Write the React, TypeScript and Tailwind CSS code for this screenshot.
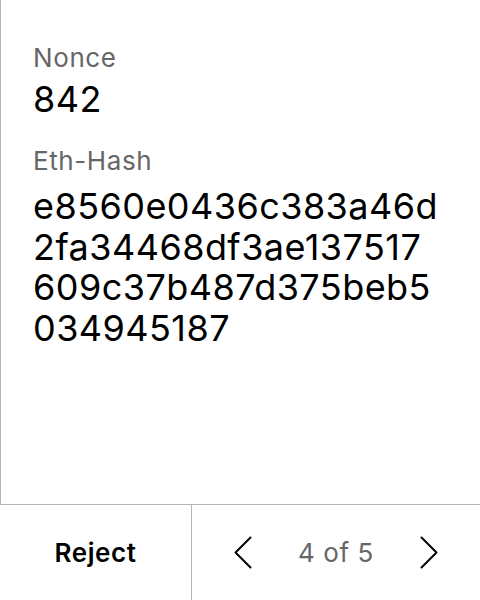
const hashLines = ["e8560e0436c383a46d", "2fa34468df3ae137517", "609c37b487d375beb5", "034945187"];

function Chevron({ dir }: { dir: "left" | "right" }) {
  return (
    <svg width="18" height="33" viewBox="0 0 18 33" fill="none" stroke="black" strokeWidth="2" strokeLinecap="round" strokeLinejoin="round">
      {dir === "left" ? <polyline points="16.5,1.5 1.5,16.5 16.5,31.5" /> : <polyline points="1.5,1.5 16.5,16.5 1.5,31.5" />}
    </svg>
  );
}

export default function App() {
  return (
    <div className="flex h-[600px] w-[480px] flex-col bg-white font-['Inter',sans-serif] text-black">
      <div className="flex-1 border-l border-[#b5b5b5] px-[32px] pt-[43px]">
        <div className="text-[26px] leading-[30px] tracking-[0.6px] text-[#666]">Nonce</div>
        <div className="mt-[6px] text-[36px] leading-[40px] tracking-[0.45px]">842</div>
        <div className="mt-[27px] text-[26px] leading-[30px] tracking-[0.6px] text-[#666]">Eth-Hash</div>
        <div className="mt-[10px] text-[36px] leading-[40.5px] tracking-[0.45px]">
          {hashLines.map((l) => (
            <div key={l}>{l}</div>
          ))}
        </div>
      </div>
      <div className="flex h-[96px] border-t border-[#b5b5b5]">
        <button className="flex w-[192px] items-center justify-center border-r border-[#b5b5b5] text-[26px] font-semibold tracking-[0.6px]">
          Reject
        </button>
        <div className="flex flex-1 items-center justify-center gap-[46px]">
          <Chevron dir="left" />
          <span className="text-[26px] tracking-[0.6px] text-[#666]">4 of 5</span>
          <Chevron dir="right" />
        </div>
      </div>
    </div>
  );
}
